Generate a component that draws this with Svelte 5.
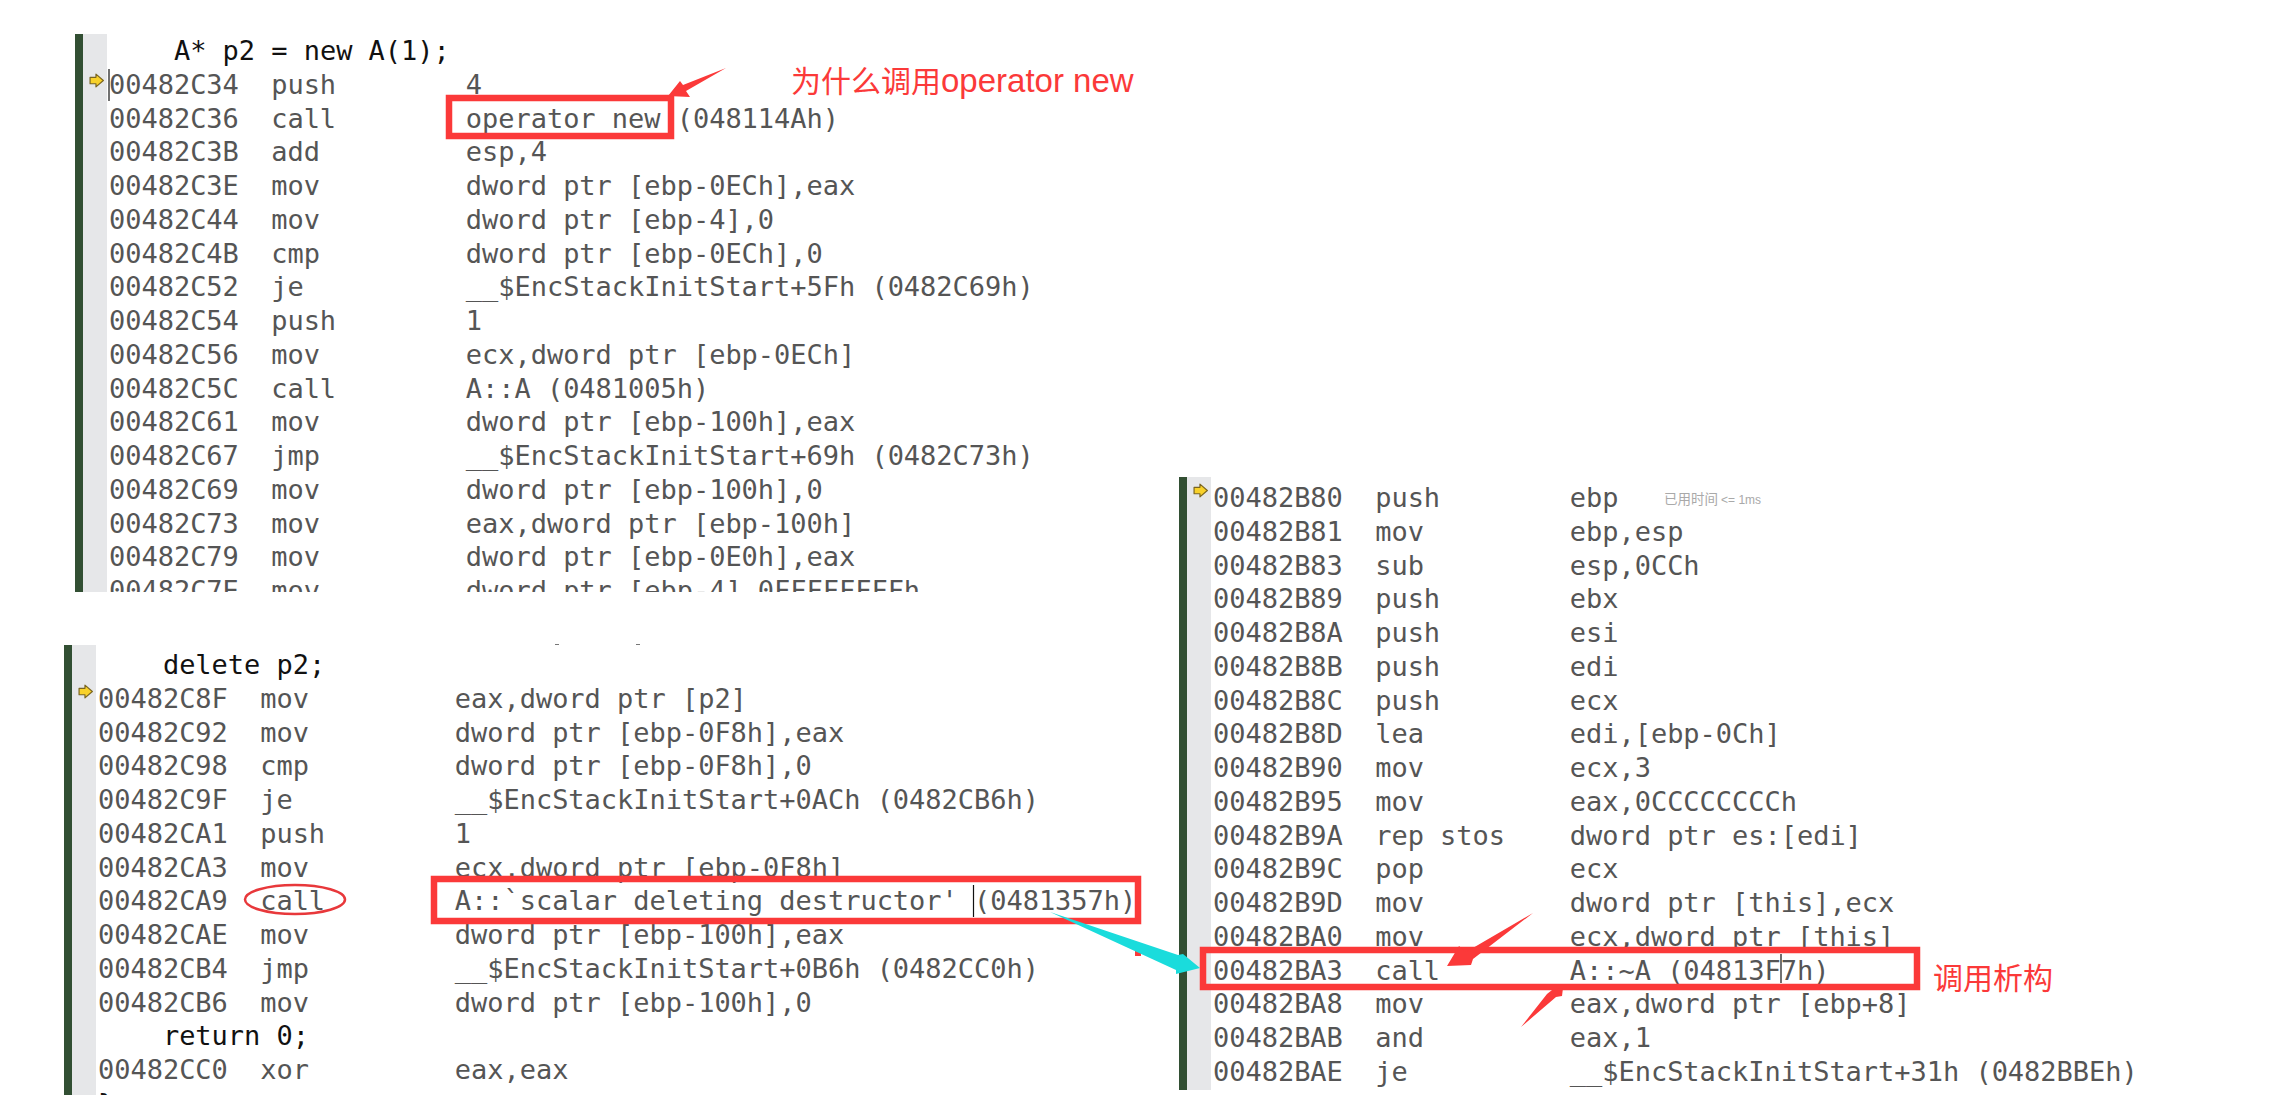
<script lang="ts">

	// Disassembly data. A row is [address, op, args]; a single string is a source line.

	type Row = string | [string, string, string];

	const first: Row[] = [
		"    A* p2 = new A(1);",
		["00482C34", "push", "4"],
		["00482C36", "call", "operator new (048114Ah)"],
		["00482C3B", "add", "esp,4"],
		["00482C3E", "mov", "dword ptr [ebp-0ECh],eax"],
		["00482C44", "mov", "dword ptr [ebp-4],0"],
		["00482C4B", "cmp", "dword ptr [ebp-0ECh],0"],
		["00482C52", "je", "__$EncStackInitStart+5Fh (0482C69h)"],
		["00482C54", "push", "1"],
		["00482C56", "mov", "ecx,dword ptr [ebp-0ECh]"],
		["00482C5C", "call", "A::A (0481005h)"],
		["00482C61", "mov", "dword ptr [ebp-100h],eax"],
		["00482C67", "jmp", "__$EncStackInitStart+69h (0482C73h)"],
		["00482C69", "mov", "dword ptr [ebp-100h],0"],
		["00482C73", "mov", "eax,dword ptr [ebp-100h]"],
		["00482C79", "mov", "dword ptr [ebp-0E0h],eax"],
		["00482C7E", "mov", "dword ptr [ebp-4],0FFFFFFFFh"]
	];

	const second: Row[] = [
		"    delete p2;",
		["00482C8F", "mov", "eax,dword ptr [p2]"],
		["00482C92", "mov", "dword ptr [ebp-0F8h],eax"],
		["00482C98", "cmp", "dword ptr [ebp-0F8h],0"],
		["00482C9F", "je", "__$EncStackInitStart+0ACh (0482CB6h)"],
		["00482CA1", "push", "1"],
		["00482CA3", "mov", "ecx,dword ptr [ebp-0F8h]"],
		["00482CA9", "call", "A::`scalar deleting destructor' (0481357h)"],
		["00482CAE", "mov", "dword ptr [ebp-100h],eax"],
		["00482CB4", "jmp", "__$EncStackInitStart+0B6h (0482CC0h)"],
		["00482CB6", "mov", "dword ptr [ebp-100h],0"],
		"    return 0;",
		["00482CC0", "xor", "eax,eax"],
		"}"
	];

	const third: Row[] = [
		["00482B80", "push", "ebp"],
		["00482B81", "mov", "ebp,esp"],
		["00482B83", "sub", "esp,0CCh"],
		["00482B89", "push", "ebx"],
		["00482B8A", "push", "esi"],
		["00482B8B", "push", "edi"],
		["00482B8C", "push", "ecx"],
		["00482B8D", "lea", "edi,[ebp-0Ch]"],
		["00482B90", "mov", "ecx,3"],
		["00482B95", "mov", "eax,0CCCCCCCCh"],
		["00482B9A", "rep stos", "dword ptr es:[edi]"],
		["00482B9C", "pop", "ecx"],
		["00482B9D", "mov", "dword ptr [this],ecx"],
		["00482BA0", "mov", "ecx,dword ptr [this]"],
		["00482BA3", "call", "A::~A (04813F7h)"],
		["00482BA8", "mov", "eax,dword ptr [ebp+8]"],
		["00482BAB", "and", "eax,1"],
		["00482BAE", "je", "__$EncStackInitStart+31h (0482BBEh)"]
	];

	const panels = [
		{ name: "one", rows: first, arrow: 1 },
		{ name: "two", rows: second, arrow: 1 },
		{ name: "three", rows: third, arrow: 0 }
	];

</script>

<main class="canvas">

	{#each panels as panel}
		<section class="panel {panel.name}">
			<div class="bar"></div>
			<div class="gutter">
				<svg class="pointer" class:src={panel.arrow === 1} viewBox="0 0 14 14" width="15" height="15">
					<path d="M1 4H6.5V1L13.4 7L6.5 13V10H1Z" fill="#f8d12a" stroke="#7a6520" stroke-width="1.1" stroke-linejoin="round" />
				</svg>
			</div>
			<div class="code">
				{#each panel.rows as row}
					{#if typeof row === "string"}
						<div class="line source">{row}</div>
					{:else}
						<div class="line"><span class="addr">{row[0]}</span><span class="op">{row[1]}</span><span>{row[2]}</span></div>
					{/if}
				{/each}
			</div>
		</section>
	{/each}

	<span class="hint">已用时间 <small>&lt;= 1ms</small></span>

	<span class="speck a"></span>
	<span class="speck b"></span>

	<!-- Annotations drawn over the pasted screenshots -->
	<svg class="marks" viewBox="0 0 2270 1113" width="2270" height="1113">
		<g fill="none" stroke="#fb3939" stroke-width="6.5">
			<rect x="449" y="98" width="222" height="38" />
			<rect x="434" y="879" width="704" height="42" />
			<rect x="1203" y="950" width="714" height="37" />
		</g>
		<ellipse cx="295" cy="899.5" rx="50" ry="14.5" fill="none" stroke="#e8383b" stroke-width="2.5" />
		<g stroke="#111" stroke-width="1.2">
			<line x1="109" y1="69" x2="109" y2="101" />
			<line x1="973.5" y1="885" x2="973.5" y2="917" />
			<line x1="1781" y1="954" x2="1781" y2="983" />
		</g>
		<g fill="#fb3939">
			<path d="M726 68L683 85L680 81L668 96L690 97L686 91Z" />
			<path d="M1533 913L1466 952L1459 946L1447 966L1471 965L1473 959Z" />
			<path d="M1521 1027L1547 994L1552 990L1563 988L1562 996L1556 997Z" />
			<rect x="1135" y="950" width="6" height="6" />
		</g>
		<path d="M1050 912L1178 955L1183 954L1200 968L1176 974L1176 970Z" fill="#1adcdc" />
	</svg>

	<span class="label q">为什么调用<b>operator new</b></span>
	<span class="label d">调用析构</span>

</main>

<style>

	:global(body){
		margin: 0;
		background: #fff;
	}

	.canvas{
		position: relative;
		width: 2270px;
		height: 1113px;
		overflow: hidden;
		background: #fff;
	}

	/* each panel is a screenshot pasted on a free canvas */

	.panel{
		position: absolute;
		display: flex;
		overflow: hidden;
	}

	.panel.one{
		left: 75px;
		top: 34px;
		width: 1000px;
		height: 558px;
	}

	.panel.two{
		left: 64px;
		top: 645px;
		width: 1100px;
		height: 450px;
	}

	.panel.three{
		left: 1179px;
		top: 477px;
		width: 1060px;
		height: 613px;
	}

	.bar{
		width: 8px;
		flex: none;
		background: #324f33;
	}

	.gutter{
		width: 24px;
		flex: none;
		position: relative;
		background: #e6e7e9;
	}

	.pointer{
		position: absolute;
		left: 6px;
		top: 6px;
	}

	.pointer.src{
		top: 39px;
	}

	.code{
		padding: 0 0 0 2px;
		font-family: "DejaVu Sans Mono", monospace;
		font-size: 27px;
		letter-spacing: -0.03px;
		line-height: 33.75px;
		color: #555;
		white-space: pre;
	}

	.two .code{
		padding-top: 3px;
		padding-left: 2px;
	}

	.three .code{
		padding-top: 4px;
		padding-left: 2px;
	}

	.line{
		height: 33.75px;
	}

	.source{
		color: #111;
	}

	.addr{
		display: inline-block;
		width: 162.2px;
	}

	.op{
		display: inline-block;
		width: 194.6px;
	}

	.hint{
		position: absolute;
		left: 1664px;
		top: 490px;
		font-family: "Noto Sans CJK SC", sans-serif;
		font-size: 13.5px;
		line-height: 16px;
		color: #a9a9a9;
	}

	.hint small{
		font-family: "Liberation Sans", sans-serif;
		font-size: 12px;
	}

	.speck{
		position: absolute;
		top: 644px;
		width: 4px;
		height: 1px;
		background: #777;
	}

	.speck.a{
		left: 555px;
	}

	.speck.b{
		left: 636px;
	}

	.marks{
		position: absolute;
		left: 0;
		top: 0;
		pointer-events: none;
	}

	.label{
		position: absolute;
		font-family: "Noto Sans CJK SC", sans-serif;
		font-size: 30px;
		line-height: 36px;
		color: #fb3939;
		white-space: nowrap;
	}

	.label b{
		font-family: "Liberation Sans", sans-serif;
		font-weight: 400;
		font-size: 33px;
	}

	.label.q{
		left: 791px;
		top: 61px;
	}

	.label.d{
		left: 1933px;
		top: 958px;
	}

</style>
